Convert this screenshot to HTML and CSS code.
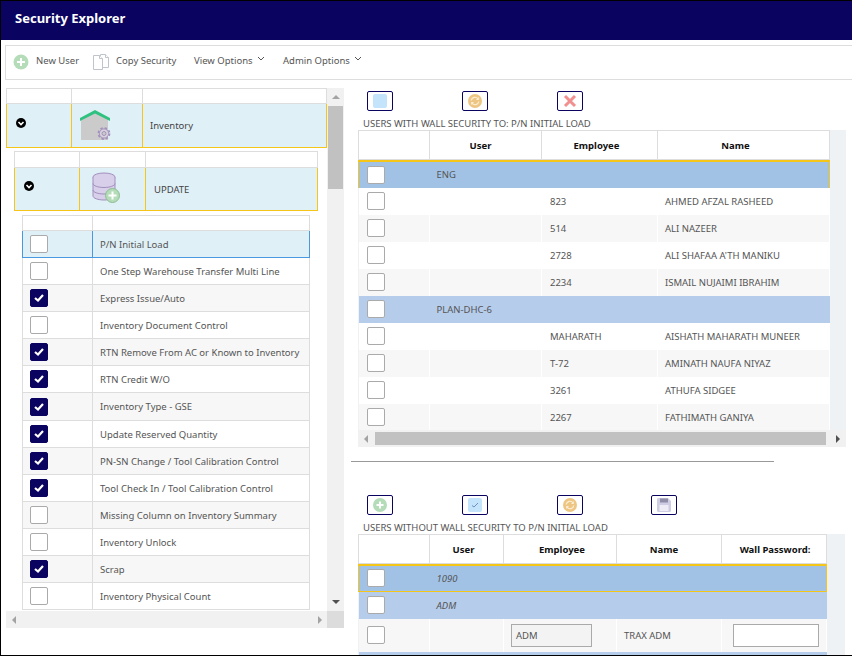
FILE: index.html
```html
<!DOCTYPE html>
<html lang="en">
<head>
<meta charset="utf-8">
<title>Security Explorer</title>
<link rel="stylesheet" href="styles.css">
</head>
<body>
<div class="page">
  <header class="title-bar">Security Explorer</header>
  <nav class="toolbar">
    <span class="tool tool-new">
      <svg class="tool-icon" width="16" height="16" viewBox="0 0 16 16"><circle cx="8" cy="8" r="7.5" fill="#b5dcb9"/><path d="M8 4v8M4 8h8" stroke="#fff" stroke-width="2"/></svg>
      New User
    </span>
    <span class="tool tool-copy">
      <svg class="tool-icon" width="16" height="16" viewBox="0 0 16 16" fill="#fff" stroke="#bfc5cb"><path d="M7.500 0.500h5l3 3v10h-8z"/><path d="M12.500 0.500v3h3"/><path d="M0.500 1.500h6l3 3v11h-9z"/><path d="M6.500 1.500v3h3"/></svg>
      Copy Security
    </span>
    <span class="tool tool-view">View Options<svg class="caret" width="8" height="5" viewBox="0 0 8 5"><path d="M1 1l3 3 3-3" fill="none" stroke="#555" stroke-width="1"/></svg></span>
    <span class="tool">Admin Options<svg class="caret" width="8" height="5" viewBox="0 0 8 5"><path d="M1 1l3 3 3-3" fill="none" stroke="#555" stroke-width="1"/></svg></span>
  </nav>

  <div class="content">
    <section class="tree-panel">
      <div class="tree-body">
        <div class="tree-view">
          <table class="grid grid-l1">
            <colgroup><col class="c65"><col class="c71"><col></colgroup>
            <tr class="head-blank"><td></td><td></td><td></td></tr>
            <tr class="group-row group-row-l1">
              <td><svg class="toggle" width="10" height="10" viewBox="0 0 10 10"><circle cx="5" cy="5" r="5" fill="#000"/><path d="M2.500 4l2.500 2.500L7.500 4" fill="none" stroke="#fff" stroke-width="1.600"/></svg></td>
              <td class="icon-cell icon-house">
                <svg width="32" height="31" viewBox="0 0 32 31"><path d="M1 8.500L15.500 2 28 8.500V30H1z" fill="#cbcbcb"/><path d="M0 8L15 0l15 8v3L15 3.500 0 11z" fill="#2fc17f"/><circle cx="24" cy="23.500" r="5.600" fill="none" stroke="#a291bb" stroke-width="1.600" stroke-dasharray="2.400 2"/><circle cx="24" cy="23.500" r="4.600" fill="#d8d3de" stroke="#a291bb"/><circle cx="24" cy="23.500" r="2" fill="#cbcbcb" stroke="#a291bb"/></svg>
              </td>
              <td class="group-label-l1">Inventory</td>
            </tr>
          </table>
          <div class="nest nest-2">
            <table class="grid grid-l2">
              <colgroup><col class="c65"><col class="c66"><col></colgroup>
              <tr class="head-blank"><td></td><td></td><td></td></tr>
              <tr class="group-row group-row-l2">
                <td><svg class="toggle" width="10" height="10" viewBox="0 0 10 10"><circle cx="5" cy="5" r="5" fill="#000"/><path d="M2.500 4l2.500 2.500L7.500 4" fill="none" stroke="#fff" stroke-width="1.600"/></svg></td>
                <td class="icon-cell icon-db">
                  <svg width="28" height="31" viewBox="0 0 28 31"><g fill="#d8cfea" stroke="#a18fbd"><ellipse cx="12" cy="5" rx="11" ry="4"/><path d="M1 5v19c0 2.200 5 4 11 4s11-1.800 11-4V5"/><path d="M1 11.500c0 2.200 5 4 11 4s11-1.800 11-4M1 18c0 2.200 5 4 11 4s11-1.800 11-4" fill="none"/></g><circle cx="20.500" cy="23.500" r="7" fill="#b5dcb9" stroke="#8dbd93"/><path d="M20.500 19.500v8M16.500 23.500h8" stroke="#fff" stroke-width="2"/></svg>
                </td>
                <td class="group-label-l2">UPDATE</td>
              </tr>
            </table>
            <div class="nest nest-3">
              <table class="grid grid-l3">
                <colgroup><col class="c70"><col></colgroup>
                <tr class="head-blank"><td></td><td></td></tr>
                <tr class="sel"><td><span class="check"></span></td><td>P/N Initial Load</td></tr>
                <tr><td><span class="check"></span></td><td>One Step Warehouse Transfer Multi Line</td></tr>
                <tr class="alt"><td><span class="check on"><svg width="10" height="8" viewBox="0 0 10 8"><path d="M1 4l3 2.500L9 1" fill="none" stroke="#fff" stroke-width="2.200"/></svg></span></td><td>Express Issue/Auto</td></tr>
                <tr><td><span class="check"></span></td><td>Inventory Document Control</td></tr>
                <tr class="alt"><td><span class="check on"><svg width="10" height="8" viewBox="0 0 10 8"><path d="M1 4l3 2.500L9 1" fill="none" stroke="#fff" stroke-width="2.200"/></svg></span></td><td>RTN Remove From AC or Known to Inventory</td></tr>
                <tr><td><span class="check on"><svg width="10" height="8" viewBox="0 0 10 8"><path d="M1 4l3 2.500L9 1" fill="none" stroke="#fff" stroke-width="2.200"/></svg></span></td><td>RTN Credit W/O</td></tr>
                <tr class="alt tall"><td><span class="check on"><svg width="10" height="8" viewBox="0 0 10 8"><path d="M1 4l3 2.500L9 1" fill="none" stroke="#fff" stroke-width="2.200"/></svg></span></td><td>Inventory Type - GSE</td></tr>
                <tr><td><span class="check on"><svg width="10" height="8" viewBox="0 0 10 8"><path d="M1 4l3 2.500L9 1" fill="none" stroke="#fff" stroke-width="2.200"/></svg></span></td><td>Update Reserved Quantity</td></tr>
                <tr class="alt"><td><span class="check on"><svg width="10" height="8" viewBox="0 0 10 8"><path d="M1 4l3 2.500L9 1" fill="none" stroke="#fff" stroke-width="2.200"/></svg></span></td><td>PN-SN Change / Tool Calibration Control</td></tr>
                <tr><td><span class="check on"><svg width="10" height="8" viewBox="0 0 10 8"><path d="M1 4l3 2.500L9 1" fill="none" stroke="#fff" stroke-width="2.200"/></svg></span></td><td>Tool Check In / Tool Calibration Control</td></tr>
                <tr class="alt"><td><span class="check"></span></td><td>Missing Column on Inventory Summary</td></tr>
                <tr><td><span class="check"></span></td><td>Inventory Unlock</td></tr>
                <tr class="alt"><td><span class="check on"><svg width="10" height="8" viewBox="0 0 10 8"><path d="M1 4l3 2.500L9 1" fill="none" stroke="#fff" stroke-width="2.200"/></svg></span></td><td>Scrap</td></tr>
                <tr><td><span class="check"></span></td><td>Inventory Physical Count</td></tr>
              </table>
            </div>
          </div>
        </div>
        <div class="vbar">
          <span class="arrow arrow-up"></span>
          <span class="vthumb"></span>
          <span class="arrow arrow-down"></span>
        </div>
      </div>
      <div class="hbar hbar-left">
        <span class="arrow arrow-left"></span>
        <span class="arrow arrow-right arrow-light"></span>
        <span class="corner"></span>
      </div>
    </section>

    <section class="users-panel">
      <div class="btn-row">
        <span class="icon-btn"><svg width="14" height="14" viewBox="0 0 14 14"><rect width="14" height="14" rx="2" fill="#c3e4fb"/></svg></span>
        <span class="icon-btn"><svg width="14" height="14" viewBox="0 0 14 14"><circle cx="7" cy="7" r="7" fill="#eec684"/><path d="M3.200 6.500A3.800 3.800 0 0 1 10 4.800M10.800 7.500A3.800 3.800 0 0 1 4 9.200" fill="none" stroke="#fbeed6" stroke-width="1.200"/><path d="M10.800 3v3H8zM3.200 11V8H6z" fill="#fbeed6"/></svg></span>
        <span class="icon-btn"><svg width="14" height="14" viewBox="0 0 14 14"><path d="M2 2l10 10M12 2L2 12" stroke="#f28f8f" stroke-width="3"/></svg></span>
      </div>
      <div class="caption">USERS WITH WALL SECURITY TO: P/N INITIAL LOAD</div>
      <div class="data-wrap data-wrap-top">
        <table class="data data-top">
          <colgroup><col class="c71"><col class="c112"><col class="c116"><col></colgroup>
          <tr class="data-head"><th></th><th>User</th><th>Employee</th><th>Name</th></tr>
          <tr class="band band-sel band-open"><td><span class="check"></span></td><td colspan="3">ENG</td></tr>
          <tr><td><span class="check"></span></td><td></td><td>823</td><td>AHMED AFZAL RASHEED</td></tr>
          <tr class="alt"><td><span class="check"></span></td><td></td><td>514</td><td>ALI NAZEER</td></tr>
          <tr><td><span class="check"></span></td><td></td><td>2728</td><td>ALI SHAFAA A'TH MANIKU</td></tr>
          <tr class="alt"><td><span class="check"></span></td><td></td><td>2234</td><td>ISMAIL NUJAIMI IBRAHIM</td></tr>
          <tr class="band band-alt"><td><span class="check"></span></td><td colspan="3">PLAN-DHC-6</td></tr>
          <tr><td><span class="check"></span></td><td></td><td>MAHARATH</td><td>AISHATH MAHARATH MUNEER</td></tr>
          <tr class="alt"><td><span class="check"></span></td><td></td><td>T-72</td><td>AMINATH NAUFA NIYAZ</td></tr>
          <tr><td><span class="check"></span></td><td></td><td>3261</td><td>ATHUFA SIDGEE</td></tr>
          <tr class="alt"><td><span class="check"></span></td><td></td><td>2267</td><td>FATHIMATH GANIYA</td></tr>
        </table>
      </div>
      <div class="hbar hbar-right">
        <span class="arrow arrow-left"></span>
        <span class="hthumb"></span>
        <span class="arrow arrow-right"></span>
      </div>
      <hr class="divider">
      <div class="btn-row btn-row-lower">
        <span class="icon-btn"><svg width="14" height="14" viewBox="0 0 14 14"><circle cx="7" cy="7" r="7" fill="#b5dcb9"/><path d="M7 3.500v7M3.500 7h7" stroke="#fff" stroke-width="2"/></svg></span>
        <span class="icon-btn"><svg width="14" height="14" viewBox="0 0 14 14"><rect width="14" height="14" rx="2" fill="#c3e4fb"/><path d="M4 7.500l2 1.500 4-4" fill="none" stroke="#6f8fc0"/></svg></span>
        <span class="icon-btn"><svg width="14" height="14" viewBox="0 0 14 14"><circle cx="7" cy="7" r="7" fill="#eec684"/><path d="M3.200 6.500A3.800 3.800 0 0 1 10 4.800M10.800 7.500A3.800 3.800 0 0 1 4 9.200" fill="none" stroke="#fbeed6" stroke-width="1.200"/><path d="M10.800 3v3H8zM3.200 11V8H6z" fill="#fbeed6"/></svg></span>
        <span class="icon-btn"><svg width="14" height="14" viewBox="0 0 14 14"><path d="M0 1.500A1.500 1.500 0 0 1 1.500 0H11l3 3v9.500a1.500 1.500 0 0 1-1.500 1.500h-11A1.500 1.500 0 0 1 0 12.500z" fill="#cfcde3"/><rect x="3" y="0.500" width="8" height="4" fill="#8f8da8"/><rect x="2.500" y="7" width="9" height="6" fill="#eeedf6"/></svg></span>
      </div>
      <div class="caption">USERS WITHOUT WALL SECURITY TO P/N INITIAL LOAD</div>
      <div class="data-wrap data-wrap-bottom">
        <table class="data data-bottom">
          <colgroup><col class="c71"><col class="c74"><col class="c113"><col class="c105"><col></colgroup>
          <tr class="data-head"><th></th><th>User</th><th>Employee</th><th>Name</th><th>Wall Password:</th></tr>
          <tr class="band band-sel"><td><span class="check"></span></td><td colspan="4" class="em">1090</td></tr>
          <tr class="band band-alt"><td><span class="check"></span></td><td colspan="4" class="em">ADM</td></tr>
          <tr class="alt input-row"><td><span class="check"></span></td><td></td><td class="pad-input"><span class="field field-ro">ADM</span></td><td>TRAX ADM</td><td class="pad-input"><span class="field field-pw"></span></td></tr>
          <tr class="band band-alt"><td></td><td colspan="4"></td></tr>
        </table>
      </div>
    </section>
  </div>
</div>
</body>
</html>
```
FILE: styles.css
```css
* { box-sizing: border-box; }
html, body { margin: 0; height: 100%; background: #fff; overflow: hidden; }
body { font-family: "Noto Sans", "Open Sans", sans-serif; font-size: 9.5px; color: #444; }
.page { width: 852px; height: 656px; border: 1px solid #000; border-right: 0; overflow: hidden; display: flex; flex-direction: column; }

.title-bar { flex: none; height: 39px; background: #0a0460; color: #fff; font-size: 13px; font-weight: 700; line-height: 34px; padding-left: 14px; }

.toolbar { flex: none; height: 35px; margin: 5px 0 0 4px; border: 1px solid #ddd; border-right: 0; display: flex; align-items: center; padding: 0 0 4px 7px; color: #555; }
.tool { display: inline-flex; align-items: center; }
.tool-icon { margin: 2px 7px 0 0; }
.tool-new { width: 80px; }
.tool-copy { width: 101px; }
.tool-view { width: 89px; }
.caret { margin: -4px 0 0 4px; }

.content { flex: none; display: flex; margin-top: 8px; height: 570px; }

.tree-panel { flex: none; width: 338px; margin-left: 5px; height: 540px; display: flex; flex-direction: column; }
.tree-body { flex: none; height: 523px; display: flex; }
.tree-view { flex: none; width: 321px; overflow: hidden; }

.grid { width: 100%; border-collapse: collapse; table-layout: fixed; }
.grid td { border: 1px solid #ddd; padding: 0; white-space: nowrap; }
.c65 { width: 65px; } .c66 { width: 66px; } .c70 { width: 70px; } .c71 { width: 71px; }
.c74 { width: 74px; } .c105 { width: 105px; } .c112 { width: 112px; }
.c113 { width: 113px; } .c116 { width: 116px; }
.head-blank td { height: 15px; background: #fff; }
.grid-l2 .head-blank td { height: 16px; }
.group-row td { background: #e0f0f7; border-color: #f5c518; }
.group-row-l1 td { height: 44px; }
.group-row-l2 td { height: 43px; }
.toggle { display: block; margin: -6px 0 0 9px; }
.icon-cell svg { display: block; }
.icon-house svg { margin: -1px 0 0 8px; }
.icon-db svg { margin: -4px 0 0 12px; }
.group-label-l1 { padding-left: 7px !important; }
.group-label-l2 { padding-left: 8px !important; }
.nest-2 { padding: 3px 9px 0 8px; }
.nest-3 { padding: 4px 8px 0; }
.grid-l3 td { height: 27px; color: #555; padding-left: 7px; }
.grid-l3 .head-blank td { height: 15px; padding: 0; }
.grid-l3 tr.tall td { height: 28px; }
.grid-l3 tr.alt td { background: #f7f7f7; }
.grid-l3 tr.sel td { background: #e0f0f7; border-color: #4a98e0; border-top-color: #ddd; }

.check { display: flex; align-items: center; justify-content: center; width: 18px; height: 18px; background: #fff; border: 1px solid #aaa; border-radius: 2px; }
.check.on { background: #0a0460; border-color: #0a0460; }

.vbar { flex: none; width: 17px; background: #f1f1f1; display: flex; flex-direction: column; align-items: center; }
.vthumb { display: block; width: 15px; height: 83px; margin-top: 7px; background: #c1c1c1; }
.arrow { display: block; width: 0; height: 0; border: 4px solid transparent; }
.arrow-up { border-top: 0; border-bottom-color: #a3a3a3; margin-top: 7px; }
.arrow-down { border-bottom: 0; border-top-color: #505050; margin-top: auto; margin-bottom: 7px; }
.arrow-left { border-left: 0; border-right-color: #a3a3a3; }
.arrow-right { border-right: 0; border-left-color: #505050; }
.arrow-light { border-left-color: #a3a3a3; }

.hbar { flex: none; height: 17px; background: #f1f1f1; display: flex; align-items: center; }
.hbar-left { padding-left: 6px; }
.hbar-left .arrow-right { margin-left: auto; margin-right: 5px; }
.corner { width: 17px; height: 17px; background: #dcdcdc; }

.users-panel { flex: none; width: 494px; margin-left: 7px; }
.btn-row { display: flex; height: 20px; margin-top: 3px; padding-left: 16px; gap: 69px; }
.btn-row-lower { margin-top: 0; }
.btn-row-lower .icon-btn:last-child { margin-left: -1px; }
.icon-btn { flex: none; width: 26px; height: 20px; border: 1px solid #0a0460; border-radius: 2px; background: #fff; display: flex; align-items: center; justify-content: center; }
.caption { height: 19px; padding-left: 12px; line-height: 26px; color: #555; }

.data-wrap { margin-left: 7px; background: #eff2f5; overflow: hidden; }
.data-wrap-top { width: 488px; height: 300px; }
.data-wrap-bottom { width: 487px; height: 130px; }
.data { border-collapse: collapse; table-layout: fixed; }
.data-top { width: 472px; }
.data-bottom { width: 469px; }
.data th { height: 30px; background: #fff; border: 1px solid #ddd; border-bottom-width: 1px; color: #111; font-size: 9.5px; font-weight: 700; padding: 0; box-shadow: inset 0 -1px 0 #ddd; }
.data-top th:nth-child(2) { padding-right: 10px; }
.data-top th:nth-child(3) { padding-right: 6px; }
.data-top th:nth-child(4) { padding-right: 16px; }
.data-bottom th:nth-child(2) { padding-right: 6px; }
.data-bottom th:nth-child(3) { padding-left: 4px; }
.data-bottom th:nth-child(4) { padding-right: 10px; }
.data-bottom th:nth-child(5) { padding-left: 2px; }
.data td { height: 27px; padding: 0 0 0 7px; background: #fff; color: #555; border-right: 1px solid #fff; white-space: nowrap; }
.data td:first-child { padding-left: 8px; }
.data-top td:nth-child(3) { padding-left: 8px; }
.data tr.alt td { background: #f7f7f7; }
.data tr.band td { background: #b6cceb; color: #555; border-right: 0; }
.data tr.band-sel td { background: #a1c2e5; border-top: 2px solid #f5c518; border-bottom: 1px solid #f5c518; }
.data tr.band-open td { border-bottom: 0; }
.data tr.band-sel td:first-child { border-left: 1px solid #f5c518; }
.data tr.band-sel td:last-child { border-right: 1px solid #f5c518; }
.data td.em { font-style: italic; color: #333; }
.data tr.input-row td { height: 33px; }
.pad-input .field-pw { margin-left: 4px; }
.field { display: flex; align-items: center; height: 23px; border: 1px solid #aaa; padding-left: 4px; }
.field-ro { width: 81px; background: #f3f3f3; }
.field-pw { width: 86px; background: #fff; }

.hbar-right { width: 488px; margin-left: 7px; padding: 0 6px; justify-content: space-between; }
.hthumb { display: block; width: 451px; height: 13px; background: #c1c1c1; margin: 0 auto 0 7px; }
.hbar-right .arrow-right { margin-left: 2px; }

.divider { width: 423px; height: 1px; margin: 14px 0 33px 0; border: 0; background: #999; }
```
